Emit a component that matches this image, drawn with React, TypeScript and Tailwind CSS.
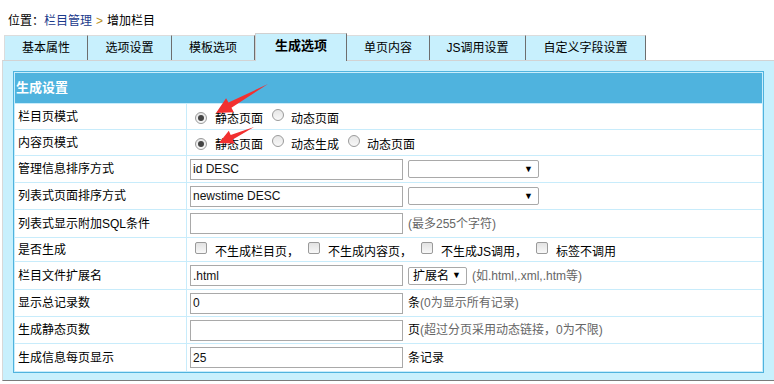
import React from 'react'

const tabs = [
  { label: '基本属性', w: 'w-[84px]' },
  { label: '选项设置', w: 'w-[84px]' },
  { label: '模板选项', w: 'w-[83px]' },
  { label: '生成选项', w: 'w-[92px]', active: true },
  { label: '单页内容', w: 'w-[83px]' },
  { label: 'JS调用设置', w: 'w-[96px]' },
  { label: '自定义字段设置', w: 'w-[120px]' },
]

const Radio = ({ checked }: { checked?: boolean }) => (
  <span className="inline-flex h-[12px] w-[12px] shrink-0 items-center justify-center rounded-full border border-[#9a9a9a] bg-gradient-to-b from-[#e6e6e6] to-[#f8f8f8]">
    {checked && <span className="h-[6px] w-[6px] rounded-full bg-[#444]" />}
  </span>
)

const Checkbox = () => (
  <span className="inline-block h-[12px] w-[12px] shrink-0 rounded-[2px] border border-[#9a9a9a] bg-gradient-to-b from-[#e2e2e2] to-[#f8f8f8]" />
)

const TextInput = ({ value }: { value?: string }) => (
  <div className="flex h-[21px] w-[213px] shrink-0 items-center border border-[#a9a9a9] bg-white pl-[2px] text-[12px] text-[#111]">
    {value}
  </div>
)

const Select = ({ label, w }: { label?: string; w: string }) => (
  <div
    className={`ml-[5px] flex h-[18px] shrink-0 items-center justify-between rounded-[2px] border border-[#a9a9a9] bg-white pl-[4px] pr-[5px] text-[12px] text-black ${w}`}
  >
    <span>{label}</span>
    <span className="text-[9px] leading-none">▼</span>
  </div>
)

const Hint = ({ children }: { children: React.ReactNode }) => (
  <span className="ml-[5px] text-[12px] text-[#666]">{children}</span>
)

// option text sits a little below the control's centre
const Opt = ({ children, ml = 'ml-[8px]' }: { children: React.ReactNode; ml?: string }) => (
  <span className={`${ml} translate-y-[2px]`}>{children}</span>
)

const Row = ({ label, h, children }: { label: string; h: string; children: React.ReactNode }) => (
  <div className={`flex gap-px ${h}`}>
    <div className="flex w-[171px] shrink-0 items-center bg-white pl-[3px] text-[12px] text-black">{label}</div>
    <div className="flex flex-1 items-center bg-white pl-[3px] text-[12px] text-black">{children}</div>
  </div>
)

function arrowPoints(tx: number, ty: number, px: number, py: number, head: number, hw: number, bw: number) {
  const len = Math.hypot(px - tx, py - ty)
  const dx = (px - tx) / len
  const dy = (py - ty) / len
  const nx = -dy
  const ny = dx
  const bx = px - dx * head
  const by = py - dy * head
  const pts = [
    [tx, ty],
    [bx + nx * bw, by + ny * bw],
    [bx + nx * hw, by + ny * hw],
    [px, py],
    [bx - nx * hw, by - ny * hw],
    [bx - nx * bw, by - ny * bw],
  ]
  return pts.map((p) => p.join(',')).join(' ')
}

export default function App() {
  return (
    <div className="relative h-[384px] w-[774px] overflow-hidden bg-white font-['Liberation_Sans','Noto_Sans_CJK_SC',sans-serif] text-[12px]">
      {/* Breadcrumb */}
      <div className="flex h-[33px] items-start pl-[8px] pt-[13px] leading-[16px] text-black">
        <span>位置：</span>
        <span className="text-[#1b3a8c]">栏目管理</span>
        <span className="mx-[4px] text-[#b8901c]">&gt;</span>
        <span>增加栏目</span>
      </div>

      {/* Tabs */}
      <div className="flex h-[27px] items-end pl-[4px]">
        {tabs.map((t, i) =>
          t.active ? (
            <div
              key={t.label}
              className={`relative z-10 -mb-px flex h-[28px] items-center justify-center border-l border-t border-r border-l-[#d0d0d0] border-t-[#d0d0d0] border-r-[#6e6e6e] bg-[#c8f0fd] pb-[3px] text-[13px] font-bold text-black ${t.w}`}
            >
              {t.label}
            </div>
          ) : (
            <div
              key={t.label}
              className={`flex h-[25px] items-center justify-center border-t border-r border-t-[#dcdcdc] border-r-[#6e6e6e] bg-[#c8f0fd] text-[12px] text-black ${i === 0 ? 'border-l border-l-[#dcdcdc]' : ''} ${t.w}`}
            >
              {t.label}
            </div>
          )
        )}
      </div>

      {/* Panel */}
      <div className="ml-[2px] h-[321px] border-b border-l border-t border-b-[#7a7a7a] border-l-[#d8d8d8] border-t-[#d3d3d3] bg-[#c8f0fd] pl-[10px] pr-[10px] pt-[10px]">
        <div className="flex w-[751px] flex-col gap-px border border-[#4fb3de] bg-[#c8ecfb] p-px">
          <div className="flex h-[30px] items-center bg-[#4fb3de] pl-[1px] text-[13px] font-bold text-white">生成设置</div>

          <Row label="栏目页模式" h="h-[25px]">
            <span className="ml-[5px]"><Radio checked /></span>
            <Opt>静态页面</Opt>
            <span className="ml-[9px]"><Radio /></span>
            <Opt ml="ml-[7px]">动态页面</Opt>
          </Row>

          <Row label="内容页模式" h="h-[25px]">
            <span className="ml-[5px]"><Radio checked /></span>
            <Opt>静态页面</Opt>
            <span className="ml-[9px]"><Radio /></span>
            <Opt ml="ml-[7px]">动态生成</Opt>
            <span className="ml-[9px]"><Radio /></span>
            <Opt ml="ml-[7px]">动态页面</Opt>
          </Row>

          <Row label="管理信息排序方式" h="h-[26px]">
            <TextInput value="id DESC" />
            <Select w="w-[131px]" />
          </Row>

          <Row label="列表式页面排序方式" h="h-[26px]">
            <TextInput value="newstime DESC" />
            <Select w="w-[131px]" />
          </Row>

          <Row label="列表式显示附加SQL条件" h="h-[27px]">
            <TextInput />
            <Hint>(最多255个字符)</Hint>
          </Row>

          <Row label="是否生成" h="h-[23px]">
            <span className="ml-[5px]"><Checkbox /></span>
            <Opt>不生成栏目页，</Opt>
            <span className="ml-[9px]"><Checkbox /></span>
            <Opt>不生成内容页，</Opt>
            <span className="ml-[9px]"><Checkbox /></span>
            <Opt>不生成JS调用，</Opt>
            <span className="ml-[9px]"><Checkbox /></span>
            <Opt>标签不调用</Opt>
          </Row>

          <Row label="栏目文件扩展名" h="h-[27px]">
            <TextInput value=".html" />
            <Select label="扩展名" w="w-[59px]" />
            <Hint>(如.html,.xml,.htm等)</Hint>
          </Row>

          <Row label="显示总记录数" h="h-[26px]">
            <TextInput value="0" />
            <span className="ml-[5px]">条</span>
            <span className="text-[#666]">(0为显示所有记录)</span>
          </Row>

          <Row label="生成静态页数" h="h-[26px]">
            <TextInput />
            <span className="ml-[5px]">页</span>
            <span className="text-[#666]">(超过分页采用动态链接，0为不限)</span>
          </Row>

          <Row label="生成信息每页显示" h="h-[27px]">
            <TextInput value="25" />
            <span className="ml-[5px]">条记录</span>
          </Row>
        </div>
      </div>

      {/* Annotation arrows */}
      <svg className="pointer-events-none absolute left-0 top-0" width="774" height="384" viewBox="0 0 774 384">
        <polygon points={arrowPoints(268, 84, 216, 113, 16, 8, 3)} fill="#f23030" />
        <polygon points={arrowPoints(254, 127, 219, 143, 14, 7, 2.5)} fill="#f23030" />
      </svg>
    </div>
  )
}
